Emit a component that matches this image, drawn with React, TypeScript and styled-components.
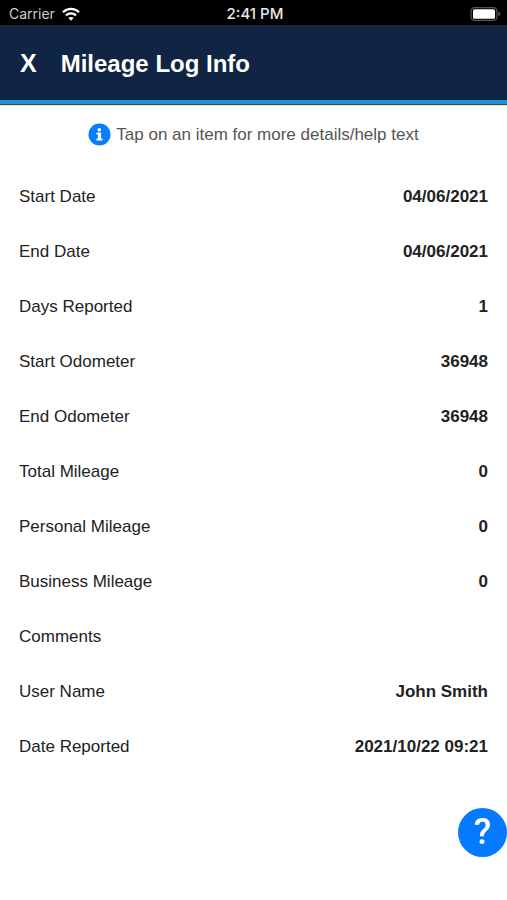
import React from "react";
import styled, { createGlobalStyle } from "styled-components";

const GlobalStyle = createGlobalStyle`
  * { box-sizing: border-box; }
  body {
    margin: 0;
    background: #fff;
    color: #222;
    font-family: "Liberation Sans", Arial, sans-serif;
    font-size: 17px;
  }
`;

const Page = styled.div`
  min-height: 100vh;
`;

const StatusBar = styled.div`
  display: grid;
  grid-template-columns: 1fr auto 1fr;
  align-items: center;
  height: 25px;
  padding: 2px 6px 0 9px;
  background: #000;
  color: #fff;
  font-family: Inter, sans-serif;
  font-size: 14px;
  line-height: 22px;
`;

const Carrier = styled.div`
  display: flex;
  align-items: center;
  gap: 7px;
  color: #ccc;
`;

const Clock = styled.time`
  font-size: 15px;
  font-weight: 500;
  color: #e8e8e8;
`;

const BatteryIcon = styled.svg`
  justify-self: end;
`;

const Header = styled.header`
  display: flex;
  align-items: center;
  gap: 24px;
  height: 79px;
  padding: 2px 20px 0;
  background: #102444;
  color: #fff;
  border-bottom: 4px solid #1b96d3;
  box-shadow: 0 1px 1px #444;
`;

const CloseButton = styled.button`
  padding: 0;
  border: 0;
  background: none;
  color: inherit;
  font: inherit;
  font-size: 25px;
  font-weight: bold;
  cursor: pointer;
`;

const Title = styled.h1`
  margin: 0;
  font-size: 24px;
  line-height: 28px;
`;

const Hint = styled.p`
  display: flex;
  align-items: center;
  justify-content: center;
  gap: 5px;
  margin: 0;
  padding: 19px 16px 23px;
  color: #555;
  line-height: 22px;
`;

const InfoIcon = styled.svg`
  flex: none;
  width: 23px;
  height: 23px;
`;

const Items = styled.ul`
  margin: 0;
  padding: 0;
  list-style: none;
`;

const ItemButton = styled.button`
  display: flex;
  align-items: center;
  justify-content: space-between;
  gap: 16px;
  width: 100%;
  min-height: 55px;
  padding: 0 19px;
  border: 0;
  background: none;
  color: inherit;
  font: inherit;
  text-align: left;
  cursor: pointer;
`;

const Value = styled.strong`
  text-align: right;
`;

const HelpButton = styled.button`
  position: fixed;
  right: 0;
  bottom: 43px;
  display: flex;
  align-items: center;
  justify-content: center;
  width: 49px;
  height: 49px;
  padding: 0;
  border: 0;
  border-radius: 50%;
  background: #057aff;
  color: #fff;
  font-family: Roboto, sans-serif;
  font-size: 36px;
  font-weight: 500;
  line-height: 49px;
  cursor: pointer;
`;

const entries = [
  { label: "Start Date", value: "04/06/2021" },
  { label: "End Date", value: "04/06/2021" },
  { label: "Days Reported", value: "1" },
  { label: "Start Odometer", value: "36948" },
  { label: "End Odometer", value: "36948" },
  { label: "Total Mileage", value: "0" },
  { label: "Personal Mileage", value: "0" },
  { label: "Business Mileage", value: "0" },
  { label: "Comments", value: "" },
  { label: "User Name", value: "John Smith" },
  { label: "Date Reported", value: "2021/10/22 09:21" },
];

export default function App() {
  return (
    <Page>
      <GlobalStyle />
      <StatusBar>
        <Carrier>
          <span>Carrier</span>
          <svg width="18" height="14" viewBox="0 0 18 14" fill="none" stroke="#fff" strokeWidth="2.3" aria-hidden="true">
            <path d="M1 5.2C5.5.8 12.5.8 17 5.2" />
            <path d="M4 8.4c2.8-2.7 7.2-2.7 10 0" />
            <path d="M9 13.7 6.4 11c1.4-1.3 3.8-1.3 5.2 0Z" fill="#fff" stroke="none" />
          </svg>
        </Carrier>
        <Clock>2:41 PM</Clock>
        <BatteryIcon width="31" height="14" viewBox="0 0 31 14" role="img" aria-label="Battery full">
          <rect x="1" y="0.7" width="26" height="12.6" rx="3.6" fill="none" stroke="#555" strokeWidth="1.3" />
          <rect x="3" y="2.2" width="22" height="9.6" rx="1.6" fill="#fff" />
          <path d="M28.5 5v4c1-.3 1.8-1 1.8-2s-.8-1.7-1.8-2Z" fill="#666" />
        </BatteryIcon>
      </StatusBar>
      <Header>
        <CloseButton type="button" aria-label="Close">X</CloseButton>
        <Title>Mileage Log Info</Title>
      </Header>
      <main>
        <Hint>
          <InfoIcon viewBox="0 0 23 23" aria-hidden="true">
            <circle cx="11.5" cy="11.5" r="11" fill="#0a7cff" />
            <circle cx="11.3" cy="6.7" r="1.8" fill="#fff" />
            <path d="M8.5 9.5h4.6v6h1.4v2h-6v-2h1.4v-4H8.5Z" fill="#fff" />
          </InfoIcon>
          <span>Tap on an item for more details/help text</span>
        </Hint>
        <Items>
          {entries.map(({ label, value }) => (
            <li key={label}>
              <ItemButton type="button">
                <span>{label}</span>
                <Value>{value}</Value>
              </ItemButton>
            </li>
          ))}
        </Items>
      </main>
      <HelpButton type="button" aria-label="Help">?</HelpButton>
    </Page>
  );
}
